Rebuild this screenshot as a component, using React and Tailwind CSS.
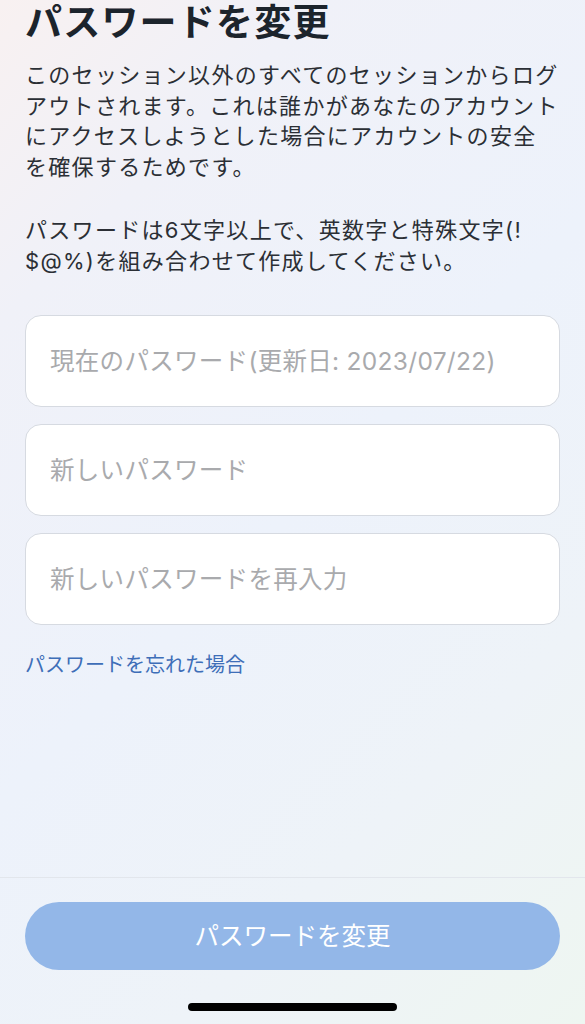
import React from "react";

const font = { fontFamily: 'Inter, "Noto Sans CJK JP", "Noto Sans", sans-serif' };

function Field({ placeholder }) {
  return (
    <input
      type="password"
      placeholder={placeholder}
      className="w-full h-[92px] rounded-[16px] border border-[#d6dae1] bg-white px-[24px] text-[24.5px] tracking-[0.3px] text-[#222] placeholder:text-[#a9aaad] outline-none"
      style={font}
    />
  );
}

export default function App() {
  return (
    <div
      className="w-[585px] h-[1024px] flex flex-col overflow-hidden bg-[linear-gradient(135deg,#f8f1f1_0%,#f0f1f8_20%,#edf2fb_50%,#eef3f8_75%,#eef6f1_100%)]"
      style={font}
    >
      <div className="flex flex-col px-[25px]">
        <h1 className="pt-[1px] text-[37px] leading-[44px] font-bold text-[#1c242c] tracking-[1.2px] whitespace-nowrap">
          パスワードを変更
        </h1>
        <p className="mt-[15px] text-[22px] leading-[30.5px] tracking-[1.3px] text-[#2b2f35] whitespace-nowrap">
          このセッション以外のすべてのセッションからログ
          <br />
          アウトされます。これは誰かがあなたのアカウント
          <br />
          にアクセスしようとした場合にアカウントの安全
          <br />
          を確保するためです。
        </p>
        <p className="mt-[33px] text-[22px] leading-[30.5px] tracking-[1.3px] text-[#2b2f35] whitespace-nowrap">
          パスワードは6文字以上で、英数字と特殊文字(!
          <br />
          $@%)を組み合わせて作成してください。
        </p>
        <div className="mt-[39px] flex flex-col gap-[17px]">
          <Field placeholder="現在のパスワード(更新日: 2023/07/22)" />
          <Field placeholder="新しいパスワード" />
          <Field placeholder="新しいパスワードを再入力" />
        </div>
        <a className="mt-[26px] text-[20px] leading-[28px] text-[#3e6eb8] self-start">
          パスワードを忘れた場合
        </a>
      </div>
      <div className="flex-1" />
      <div className="border-t border-[#e2e6ec] flex flex-col items-center px-[25px] pt-[24px] pb-[13px]">
        <button
          className="w-full h-[68px] rounded-full bg-[#93b7e8] text-white text-[24.5px]"
          style={font}
        >
          パスワードを変更
        </button>
        <div className="mt-[33px] w-[209px] h-[8px] rounded-full bg-black" />
      </div>
    </div>
  );
}
